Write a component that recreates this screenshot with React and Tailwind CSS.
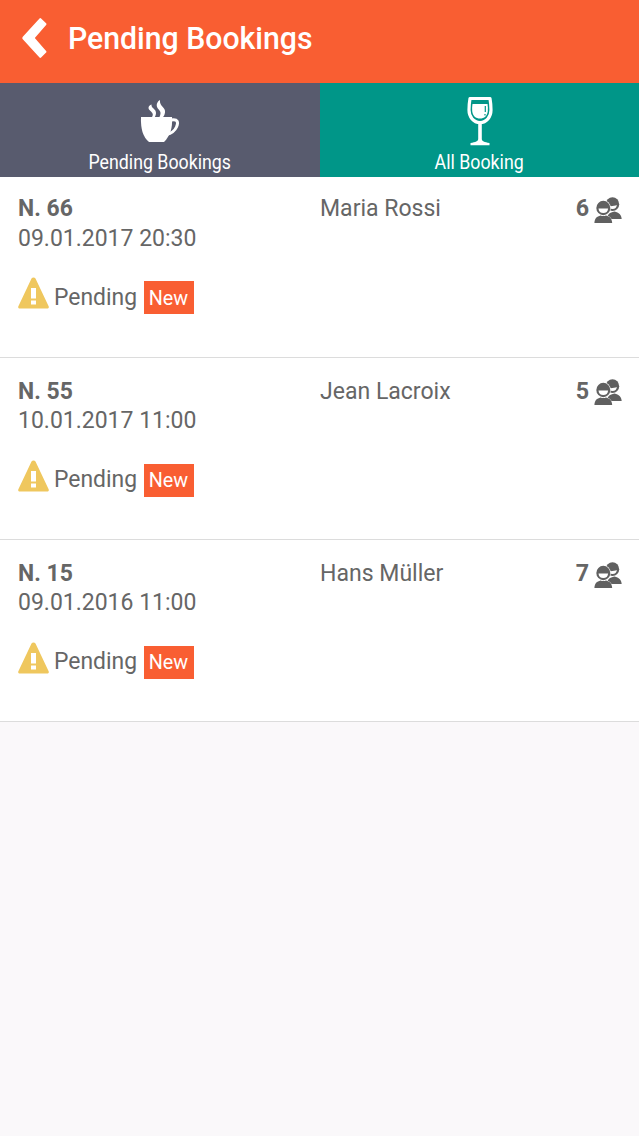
const bookings = [
  { id: 66, date: '09.01.2017 20:30', name: 'Maria Rossi', guests: 6 },
  { id: 55, date: '10.01.2017 11:00', name: 'Jean Lacroix', guests: 5 },
  { id: 15, date: '09.01.2016 11:00', name: 'Hans Müller', guests: 7 },
];

function BackIcon() {
  return (
    <svg className="h-[42px] w-[26px]" viewBox="0 0 26 42">
      <path d="M17.500 1.500q.8-.8 1.600 0l5 4.800q.8.8 0 1.600L12.800 21l11.300 13q.8.800 0 1.600l-5 5q-.8.800-1.600 0L.8 22.300q-1-1.300 0-2.600Z" fill="white" />
    </svg>
  );
}

function CoffeeIcon() {
  return (
    <svg className="h-[44px] w-10" viewBox="0 0 40 44" fill="none">
      <path d="M1 17h31c.8 11-2 19-8 25H9C3 37 .5 29 1 17Z" fill="white" />
      <path d="M31 20c7-1.500 7.500 2.500 5.500 7-1.800 4-5.500 6.500-10 7.500" stroke="white" strokeWidth="3" />
      <path d="M12 17c2-3 0-4.500-1.500-6C7.500 8.500 8 6 11.500 4.500c-.5 4 4.500 4 4.500 8.500 0 1.500-.6 3-1.200 4Z" fill="white" />
      <path d="M19.500 17c2.500-5 0-6.500-2-9-2-4 .5-7 2.500-8-.8 6.500 6 7.500 5 12.500-.4 2-1 3.700-2 4.500Z" fill="white" />
    </svg>
  );
}

function WineIcon() {
  return (
    <svg className="h-[50px] w-[26px]" viewBox="0 0 26 50" fill="none">
      <path d="M3 2.500h20c.7 4 1 7.500 1 11.500 0 7-4.500 12.500-11 12.500S2 21 2 14c0-4 .3-7.500 1-11.500Z" stroke="white" strokeWidth="3.200" strokeLinejoin="round" />
      <path d="M5.500 8h15c.4 2.500.5 4.500.3 7-.5 5-3.500 7.500-7.800 7.500S5.700 20 5.200 15c-.2-2.500-.1-4.500.3-7Z" fill="white" />
      <path d="M18.300 10v6M18 18v1.500" stroke="#009688" strokeWidth="1.200" />
      <path d="M11.200 26h3.600v17c0 2.500 2.700 3 7.700 4v2.300H3.500V47c5-1 7.700-1.500 7.700-4Z" fill="white" />
    </svg>
  );
}

function WarningIcon() {
  return (
    <svg className="h-8 w-[31px] shrink-0" viewBox="0 0 31 32">
      <path d="M13.500 1.500c.8-1.500 3.200-1.500 4 0l13 27.500c.8 1.600 0 2.500-1.500 2.500H2c-1.500 0-2.300-.9-1.500-2.500Z" fill="#efc75e" />
      <path d="M13 11h5v10.500h-5ZM13 23.500h5v4h-5Z" fill="white" />
    </svg>
  );
}

function GuestsIcon() {
  return (
    <svg className="h-[27px] w-7" viewBox="0 0 28 27">
      <ellipse cx="18.500" cy="7.200" rx="6.700" ry="6.900" fill="#606060" />
      <path d="M13 22c.5-5 2.500-6.500 7.500-7.500 4.500 1 6.700 3 7.200 7.500Z" fill="#606060" />
      <path d="M14.500 9c2.500.4 6.500 0 8.300-1-.2 2.500-1.700 4-4.300 4s-3.800-1-4-3Z" fill="white" />
      <ellipse cx="9.300" cy="11" rx="7.500" ry="7.700" fill="white" />
      <path d="M0 26.500c.5-6 3-8 9.300-8.500 6.300.5 8.800 2.500 9.300 8.500Z" fill="white" />
      <ellipse cx="9.300" cy="11" rx="7" ry="7.200" fill="#606060" />
      <path d="M.4 26c.4-4.800 2.300-6.500 6.200-7.500 1.600.8 3.800.8 5.400 0 3.900 1 5.800 2.700 6.200 7.500Z" fill="#606060" />
      <path d="M4.500 11.500h9.600c-.2 3-2 4.500-4.800 4.500s-4.600-1.500-4.800-4.500Z" fill="white" />
    </svg>
  );
}

function Booking({ booking }) {
  return (
    <li className="flex h-[182.300px] border-b border-[#dcdcdc] bg-white pt-[18px] pr-[17px] pl-[18px] text-[24.500px] leading-[30px] text-[#666] first:h-[180.800px] first:pt-[16.400px]">
      <div className="w-[302px]">
        <div className="h-[29.300px] origin-left scale-x-[0.935] font-bold whitespace-nowrap">N. {booking.id}</div>
        <div className="h-[54.500px] origin-left scale-x-[0.938] whitespace-nowrap">{booking.date}</div>
        <div className="flex h-[34px]">
          <WarningIcon />
          <span className="mt-[4.500px] ml-[5px] w-[90px] origin-left scale-x-[0.935] whitespace-nowrap">Pending</span>
          <span className="mt-1 -ml-[0.500px] flex h-[33px] w-[50px] shrink-0 items-center justify-center bg-[#f95e32] text-[21px] text-white">
            <span className="-translate-x-[0.500px] scale-x-[0.94]">New</span>
          </span>
        </div>
      </div>
      <div className="flex-1 origin-left scale-x-[0.94] whitespace-nowrap">{booking.name}</div>
      <div className="flex gap-[5px]">
        <span className="origin-right scale-x-[0.95] font-bold">{booking.guests}</span>
        <span className="mt-[3.500px]"><GuestsIcon /></span>
      </div>
    </li>
  );
}

export default function App() {
  return (
    <div className="min-h-screen bg-[#faf8fa] font-[Roboto,sans-serif]">
      <header className="flex h-[83px] items-start bg-[#f95e32] pt-[17px] pl-[22px] text-white">
        <BackIcon />
        <h1 className="ml-5 origin-left scale-x-[0.944] text-[32px] leading-[43px] font-medium whitespace-nowrap">Pending Bookings</h1>
      </header>
      <nav className="grid h-[94px] grid-cols-[320px_1fr] text-[20px] leading-6 text-white">
        <button className="flex flex-col items-center bg-[#585b6e] pt-[17px]">
          <CoffeeIcon />
          <span className="mt-[6px] -translate-x-[0.500px] scale-x-[0.888]">Pending Bookings</span>
        </button>
        <button className="flex flex-col items-center bg-[#009688] pt-[13px]">
          <WineIcon />
          <span className="mt-1 scale-x-[0.888]">All Booking</span>
        </button>
      </nav>
      <ul>
        {bookings.map((booking) => (
          <Booking key={booking.id} booking={booking} />
        ))}
      </ul>
    </div>
  );
}
